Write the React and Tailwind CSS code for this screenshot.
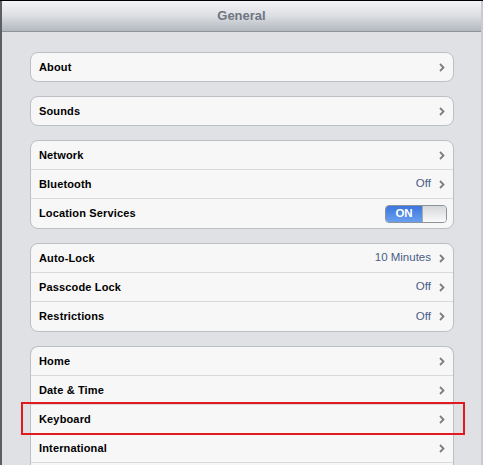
import React from 'react';

const Chevron = () => (
  <svg width="6" height="9" viewBox="0 0 6 9" className="shrink-0">
    <path d="M1 1 L4.5 4.5 L1 8" fill="none" stroke="#7c7e82" strokeWidth="1.8" />
  </svg>
);

const Toggle = () => (
  <div className="flex h-[18px] w-[62px] overflow-hidden rounded-[4px] border border-[#8e9299]">
    <div className="flex w-[36px] items-center justify-center bg-gradient-to-b from-[#3b76dc] to-[#6a9ff0] text-[11.5px] font-bold text-white">
      ON
    </div>
    <div className="flex-1 border-l border-[#a7a9ad] bg-gradient-to-b from-[#d6d7d9] to-[#fafafa]" />
  </div>
);

const Row = ({ label, value, toggle, last, tall, highlight }) => (
  <div
    className={`relative flex items-center pl-[8px] pr-[8px] ${
      last ? (tall ? 'h-[29px]' : 'h-[28px]') : 'h-[29px] border-b border-[#d9d9db]'
    }`}
  >
    <span className="flex-1 text-[11px] font-bold tracking-[0.15px] text-black">{label}</span>
    {toggle ? (
      <div className="-mr-[2px]">
        <Toggle />
      </div>
    ) : (
      label && (
        <div className="flex items-center gap-[8px]">
          {value && <span className="text-[11.5px] text-[#4b5d86]">{value}</span>}
          <Chevron />
        </div>
      )
    )}
    {highlight && (
      <div className="absolute -left-[10px] -top-[3px] h-[33px] w-[444px] border-2 border-[#e01a1f]" />
    )}
  </div>
);

const Group = ({ rows, open }) => (
  <div
    className={`border border-[#bcbfc4] bg-[#f7f7f7] ${open ? 'rounded-t-[8px] border-b-0' : 'rounded-[8px]'}`}
  >
    {rows.map((r, i) => (
      <Row key={i} {...r} last={!open && i === rows.length - 1} tall={rows.length > 1} />
    ))}
  </div>
);

export default function App() {
  return (
    <div className="h-[465px] w-[483px] overflow-hidden bg-black pt-px font-['Liberation_Sans',Arial,sans-serif]">
      <div className="flex h-[464px] flex-col border-l-2 border-r-2 border-l-[#5d5e61] border-r-[#c9cbd0] bg-[#dfe1e5]">
        <div className="flex h-[31px] shrink-0 items-center justify-center border-b border-[#8f939b] bg-gradient-to-b from-[#f3f4f6] via-[#dcdee2] to-[#b3b7bf]">
          <span className="text-[13px] font-bold text-[#6f7582]">General</span>
        </div>
        <div className="flex flex-col gap-[14px] pl-[28px] pr-[27px] pt-[20px]">
          <Group rows={[{ label: 'About' }]} />
          <Group rows={[{ label: 'Sounds' }]} />
          <Group
            rows={[
              { label: 'Network' },
              { label: 'Bluetooth', value: 'Off' },
              { label: 'Location Services', toggle: true },
            ]}
          />
          <Group
            rows={[
              { label: 'Auto-Lock', value: '10 Minutes' },
              { label: 'Passcode Lock', value: 'Off' },
              { label: 'Restrictions', value: 'Off' },
            ]}
          />
          <Group
            open
            rows={[
              { label: 'Home' },
              { label: 'Date & Time' },
              { label: 'Keyboard', highlight: true },
              { label: 'International' },
              { label: '' },
            ]}
          />
        </div>
      </div>
    </div>
  );
}
